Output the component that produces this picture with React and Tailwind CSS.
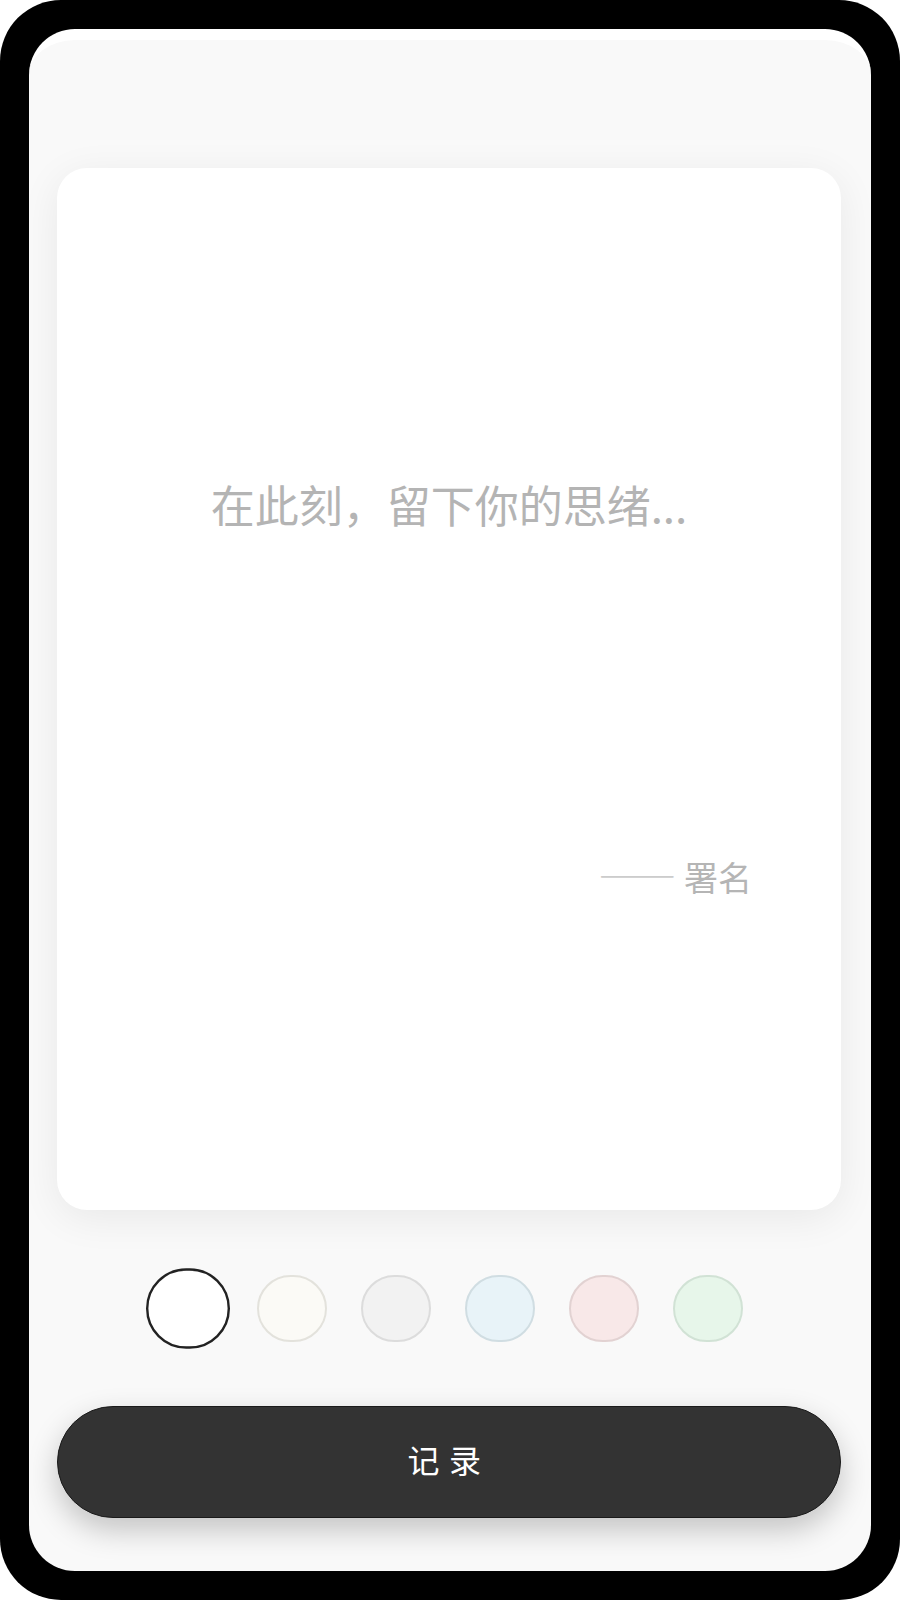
import React, { useState } from 'react'

const swatches = [
  { bg: 'bg-white', border: 'border-[#222222]' },
  { bg: 'bg-[#fbfaf6]', border: 'border-[#e3e2dc]' },
  { bg: 'bg-[#f2f2f2]', border: 'border-[#dcdcdc]' },
  { bg: 'bg-[#e8f3f8]', border: 'border-[#d0dde2]' },
  { bg: 'bg-[#f8e8e8]', border: 'border-[#e2d2d2]' },
  { bg: 'bg-[#e7f6ea]', border: 'border-[#d1e2d5]' },
]

export default function App() {
  const [selected, setSelected] = useState(0)

  return (
    <div
      className="w-[900px] h-[1600px] bg-black rounded-[61px] p-[29px]"
      style={{ fontFamily: '"Noto Sans CJK SC", "Noto Sans", sans-serif' }}
    >
      <div className="h-full rounded-[46px] bg-[#f9f9f9] border-t-[11px] border-white overflow-hidden flex flex-col pl-[28px] pr-[30px] pt-[128px]">
        {/* 卡片 */}
        <div className="h-[1042px] bg-white rounded-[30px] shadow-[0_8px_40px_rgba(0,0,0,0.07)] flex flex-col px-[56px]">
          <div className="mt-[306px] h-[60px] leading-[60px] text-center text-[44px] text-[#b4b4b4]">
            在此刻，留下你的思绪...
          </div>
          <div className="mt-[316px] leading-[48px] text-right pr-[33px] text-[34px] text-[#b5b5b5]">
            <span className="text-[39px] text-[#cccccc] [font-feature-settings:'fwid']">——</span> 署名
          </div>
        </div>

        {/* 颜色选择 */}
        <div className="mt-[56px] h-[84px] flex items-center justify-center gap-[34px] pr-[3px]">
          {swatches.map((s, i) => (
            <button
              key={i}
              onClick={() => setSelected(i)}
              className={`w-[70px] h-[67px] rounded-full border-2 ${s.bg} ${
                i === selected ? 'border-[#222222] scale-120' : s.border
              }`}
            />
          ))}
        </div>

        <button className="mt-[56px] h-[112px] rounded-full bg-[#333333] border border-[#1a1a1a] shadow-[0_12px_30px_rgba(0,0,0,0.22)] text-white text-[32px] tracking-[0.3em] pb-[6px]">
          记录
        </button>
      </div>
    </div>
  )
}
